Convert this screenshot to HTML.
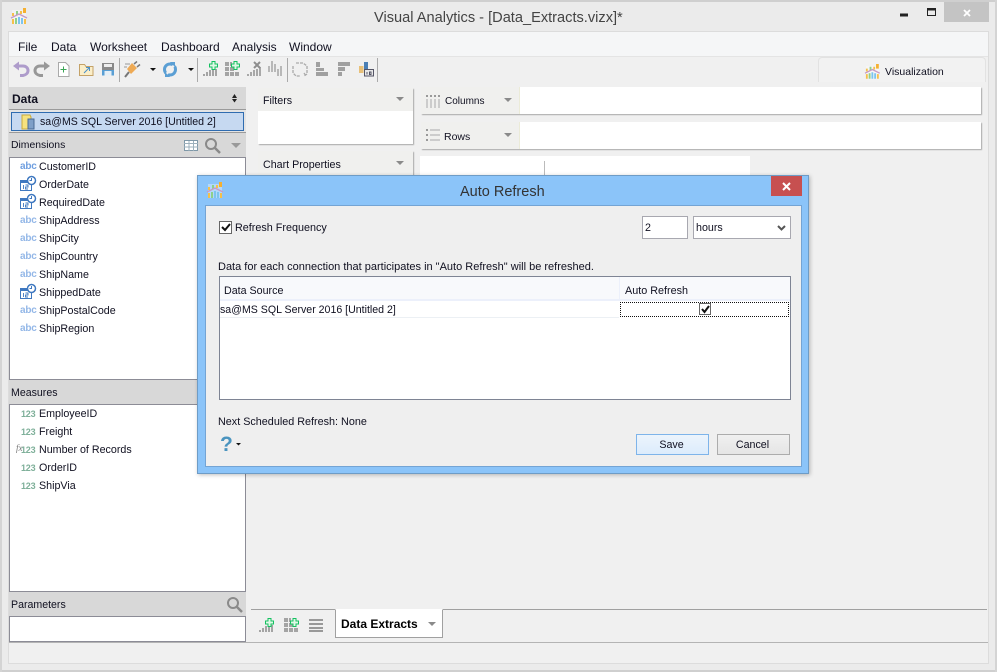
<!DOCTYPE html>
<html><head><meta charset="utf-8">
<style>
html,body{margin:0;padding:0;width:997px;height:672px;overflow:hidden;background:#ebebeb}
body{position:relative;font-family:"Liberation Sans",sans-serif;font-size:10.7px;color:#101020}
.b{position:absolute;box-sizing:border-box}
.t{position:absolute;white-space:nowrap;line-height:14px;margin-top:1px}
svg{position:absolute;left:0;top:0}
.abc{position:absolute;left:20px;color:#6f9fe0;font-size:10px;font-weight:bold;line-height:14px;margin-top:1px;letter-spacing:-.2px}
.n{position:absolute;left:21px;color:#7fb09a;font-size:9px;font-weight:bold;line-height:14px;margin-top:1px;letter-spacing:-.2px}
.f{position:absolute;left:39px;white-space:nowrap;line-height:14px;font-size:10.7px;margin-top:1px}
.tri{position:absolute;width:0;height:0;border-left:4.5px solid transparent;border-right:4.5px solid transparent;border-top:4.5px solid #8a8a8a}
.sh{background:#fff;box-shadow:1px 1px 1px #aaa}
</style></head><body>
<div class="b" style="left:0;top:0;width:997px;height:2px;background:#cfcfcf"></div>
<div class="b" style="left:0;top:670px;width:997px;height:2px;background:#cfcfcf"></div>
<div class="b" style="left:0;top:0;width:2px;height:672px;background:#d4d4d4"></div>
<div class="b" style="left:995px;top:0;width:2px;height:672px;background:#d4d4d4"></div>
<div class="t" style="left:374px;top:7px;font-size:14.6px;line-height:20px;color:#444">Visual Analytics - [Data_Extracts.vizx]*</div>

<div class="b" style="left:8px;top:31px;width:981px;height:633px;background:#f0f0f0;border:1px solid #dcdcdc"></div>
<div class="b" style="left:9px;top:32px;width:979px;height:25px;background:#f5f6f7;border-bottom:1px solid #e4e4e4"></div>
<div class="t" style="left:18px;top:39px;font-size:12px">File</div>
<div class="t" style="left:51px;top:39px;font-size:12px">Data</div>
<div class="t" style="left:90px;top:39px;font-size:12px">Worksheet</div>
<div class="t" style="left:161px;top:39px;font-size:12px">Dashboard</div>
<div class="t" style="left:232px;top:39px;font-size:12px">Analysis</div>
<div class="t" style="left:289px;top:39px;font-size:12px">Window</div>

<!-- visualization tab -->
<div class="b" style="left:818px;top:57px;width:168px;height:25px;background:#f2f2f2;border:1px solid #e2e2e2;border-bottom:none;border-radius:4px 4px 0 0"></div>
<div class="t" style="left:885px;top:64px;font-size:10.5px">Visualization</div>

<!-- left panel -->
<div class="b" style="left:9px;top:87px;width:237px;height:555px;background:#d8d8d8"></div>
<div class="t" style="left:12px;top:91px;font-size:12px;font-weight:bold">Data</div>
<div class="b" style="left:9px;top:109px;width:237px;height:24px;background:#e4e4e4;border-top:1px solid #9a9a9a;border-bottom:1px solid #9a9a9a"></div>
<div class="b" style="left:11px;top:112px;width:233px;height:19px;background:#c6d9f1;border:1px solid #2f6cb0"></div>
<div class="t" style="left:40px;top:114px;font-size:10.6px">sa@MS SQL Server 2016 [Untitled 2]</div>
<div class="t" style="left:11px;top:138px;font-size:10.4px">Dimensions</div>
<div class="b" style="left:9px;top:157px;width:237px;height:223px;background:#fff;border:1px solid #8c8c96"></div>
<div class="abc" style="top:159px">abc</div><div class="f" style="top:159px">CustomerID</div>
<div class="f" style="top:177px">OrderDate</div>
<div class="f" style="top:195px">RequiredDate</div>
<div class="abc" style="top:213px;opacity:.75">abc</div><div class="f" style="top:213px">ShipAddress</div>
<div class="abc" style="top:231px;opacity:.75">abc</div><div class="f" style="top:231px">ShipCity</div>
<div class="abc" style="top:249px;opacity:.75">abc</div><div class="f" style="top:249px">ShipCountry</div>
<div class="abc" style="top:267px;opacity:.75">abc</div><div class="f" style="top:267px">ShipName</div>
<div class="f" style="top:285px">ShippedDate</div>
<div class="abc" style="top:303px;opacity:.75">abc</div><div class="f" style="top:303px">ShipPostalCode</div>
<div class="abc" style="top:321px;opacity:.75">abc</div><div class="f" style="top:321px">ShipRegion</div>
<div class="t" style="left:11px;top:385px;font-size:10.6px">Measures</div>
<div class="b" style="left:9px;top:404px;width:237px;height:188px;background:#fff;border:1px solid #8c8c96"></div>
<div class="n" style="top:406px">123</div><div class="f" style="top:406px">EmployeeID</div>
<div class="n" style="top:424px">123</div><div class="f" style="top:424px">Freight</div>
<div class="t" style="left:16px;top:440px;font-size:9px;font-style:italic;color:#777;font-family:'Liberation Serif',serif">fx</div>
<div class="n" style="top:442px">123</div><div class="f" style="top:442px">Number of Records</div>
<div class="n" style="top:460px">123</div><div class="f" style="top:460px">OrderID</div>
<div class="n" style="top:478px">123</div><div class="f" style="top:478px">ShipVia</div>
<div class="t" style="left:11px;top:597px;font-size:10.6px">Parameters</div>
<div class="b" style="left:9px;top:616px;width:237px;height:26px;background:#fff;border:1px solid #8c8c96"></div>

<!-- filters -->
<div class="b sh" style="left:258px;top:88px;width:155px;height:56px"></div>
<div class="b" style="left:258px;top:88px;width:155px;height:23px;background:#f0f0ee"></div>
<div class="t" style="left:263px;top:93px">Filters</div>
<div class="tri" style="left:396px;top:97px"></div>
<div class="b sh" style="left:258px;top:151px;width:155px;height:40px"></div>
<div class="b" style="left:258px;top:151px;width:155px;height:26px;background:#f0f0ee"></div>
<div class="t" style="left:263px;top:157px">Chart Properties</div>
<div class="tri" style="left:396px;top:161px"></div>

<!-- shelves -->
<div class="b sh" style="left:421px;top:87px;width:560px;height:27px"></div>
<div class="b" style="left:421px;top:87px;width:99px;height:27px;background:#f0f0ee;border-right:1px solid #ebebd8"></div>
<div class="t" style="left:445px;top:94px;font-size:10px">Columns</div>
<div class="tri" style="left:504px;top:98px"></div>
<div class="b sh" style="left:421px;top:122px;width:560px;height:27px"></div>
<div class="b" style="left:421px;top:122px;width:99px;height:27px;background:#f0f0ee;border-right:1px solid #ebebd8"></div>
<div class="t" style="left:444px;top:129px;font-size:10.5px">Rows</div>
<div class="tri" style="left:504px;top:133px"></div>
<div class="b" style="left:420px;top:156px;width:330px;height:30px;background:#fff"></div>
<div class="b" style="left:544px;top:161px;width:1px;height:25px;background:#bbb"></div>

<!-- tab bar -->
<div class="b" style="left:251px;top:609px;width:736px;height:1px;background:#a0a0a0"></div>
<div class="b" style="left:335px;top:609px;width:108px;height:29px;background:#fff;border:1px solid #a0a0a0;border-top:1px solid #fff"></div>
<div class="t" style="left:341px;top:616px;font-size:12px;font-weight:bold;color:#000">Data Extracts</div>
<div class="tri" style="left:428px;top:622px"></div>
<div class="b" style="left:9px;top:642px;width:979px;height:1px;background:#b4b4b4"></div>

<!-- base icons -->
<svg width="997" height="672" viewBox="0 0 997 672" fill="none">
<defs>
<g id="logo">
<rect x="1" y="2" width="14" height="14" fill="#fff" opacity=".35"/>
<path d="M1 11h2v5h-2zM13 11h2v5h-2z" fill="#f5c04a"/>
<path d="M4 10h2v6h-2z" fill="#8fd08a"/>
<path d="M7 9h2v7h-2zM10 10h2v6h-2z" fill="#7cc4ee"/>
<path d="M1 5h2v3h-2zM9 3h2v3h-2z" fill="#f5c04a"/>
<path d="M5 3h2v4h-2z" fill="#8fd08a"/>
<path d="M12 0h3v5h-3z" fill="#f5b030"/>
<path d="M0 10l8-4 8 4" stroke="#c79ac4" stroke-width="1.400"/>
</g>
</defs>
<use href="#logo" transform="translate(11,8)"/>
<!-- undo -->
<path d="M18 66h5c3 0 5 2 5 4.500s-2 4.500-5 5h-3" stroke="#ae9ccb" stroke-width="3"/><path d="M13 66l6-4.500v9z" fill="#ae9ccb"/>
<!-- redo -->
<path d="M45 66h-5c-3 0-5 2-5 4.500s2 4.500 5 5h3" stroke="#989898" stroke-width="3"/><path d="M50 66l-6-4.500v9z" fill="#989898"/>
<!-- new -->
<path d="M58.500 62.500h7l3.500 3.500v10.500h-10.500z" fill="#fff" stroke="#aaa"/><path d="M63.500 66.500v6M60.500 69.500h6" stroke="#3aa655"/>
<!-- folder -->
<path d="M79.500 65.500v10h13.500v-9h-7l-1.500-2h-5z" fill="#fbeec8" stroke="#c4a268"/><path d="M84 73l5-5M86 67.500h3.500v3.500" stroke="#4a90c8"/>
<!-- save -->
<path d="M102 63h12v12.500h-12z" fill="#8a8a8a"/><path d="M104 64h8v3h-8z" fill="#eee"/><path d="M102 70h12v5.500h-12z" fill="#5a9fd4"/><path d="M104.500 71h7v4.500h-7z" fill="#e6eff6"/>
<path d="M119.500 58v24" stroke="#aaa"/>
<!-- plug -->
<path d="M125 77l4-5" stroke="#777" stroke-width="2"/><path d="M127 69l5-6 5 5-6 6z" fill="#eeaa55"/><path d="M134 64l3-2.500M137 67l3-2.500" stroke="#777" stroke-width="1.500"/><path d="M125 64h5M124 67h3" stroke="#999"/>
<path d="M150 68h6l-3 3z" fill="#111"/>
<!-- refresh -->
<circle cx="170" cy="69.500" r="5.500" stroke="#5b9fd4" stroke-width="3"/><path d="M176 63l-12 14" stroke="#f0f0f0" stroke-width="2.200"/><path d="M170 62h5v5zM170 77h-5v-5z" fill="#5b9fd4"/>
<path d="M188 68h6l-3 3z" fill="#111"/>
<path d="M197.500 58v24" stroke="#aaa"/>
<!-- chart+ -->
<path d="M203 74h2v2h-2zM206 72h2v4h-2zM209 70h2v6h-2zM212 70h2v6h-2zM215 69h2v7h-2z" fill="#a4a4a4"/>
<path d="M212 61.500h3v2.500h2.500v3h-2.500v2.500h-3v-2.500h-2.500v-3h2.500z" fill="#dff8e6" stroke="#14c060"/>
<!-- grid+ -->
<path d="M225 62h4v4h-4zM230 62h2v4h-2zM225 67h4v4h-4zM230 67h4v4h-4zM235 72h4v4h-4zM225 72h4v4h-4zM230 72h4v4h-4z" fill="#a4a4a4"/>
<path d="M234 61.500h3v2.500h2.500v3h-2.500v2.500h-3v-2.500h-2.500v-3h2.500z" fill="#dff8e6" stroke="#14c060"/>
<!-- chart x -->
<path d="M247 74h2v2h-2zM250 72h2v4h-2zM253 70h2v6h-2zM256 69h2v7h-2zM259 67h2v9h-2z" fill="#a8a8a8"/>
<path d="M254 62l6 6M260 62l-6 6" stroke="#8e8e8e" stroke-width="2"/>
<!-- chart -->
<path d="M268 66h2v6h-2zM271 61h2v11h-2zM274 64h2v8h-2zM277 69h2v7h-2zM280 66h2v10h-2z" fill="#b8b8b8"/>
<path d="M287.500 58v24" stroke="#aaa"/>
<!-- lasso -->
<path d="M296 63h7l4 3v8l-3 2M293 66v7l3 3h4M304 73l2 3" stroke="#aaa" stroke-width="1.300" stroke-dasharray="3 1"/>
<!-- sort -->
<path d="M316 62h4v5h-4zM316 68h8v3h-8zM316 72h12v4h-12z" fill="#a0a0a0"/>
<path d="M338 62h12v4h-12zM338 67h7v4h-7zM338 72h4v4h-4z" fill="#a0a0a0"/>
<path d="M359 66h4.500v7h-4.500z" fill="#e8c078"/><path d="M364 62h4v7h-4z" fill="#4a7fb5"/><path d="M364.500 69.500h9v6.500h-9z" fill="#e8e8e8" stroke="#556"/><path d="M367 72v2.500M369.500 72h1.500v2.500h-1.500z" stroke="#556"/>
<path d="M377.500 58v24" stroke="#aaa"/>
<!-- visualization logo -->
<use href="#logo" transform="translate(865,64) scale(.92)"/>
<!-- window buttons -->
<path d="M900 13.500h8v3h-8z" fill="#222"/>
<path d="M927.500 8.500h8v7h-8z" stroke="#222"/><path d="M927 9.500h9" stroke="#222" stroke-width="2"/>
<path d="M944 2h45v20h-45z" fill="#c4c4c4"/><path d="M964 10l6 6M970 10l-6 6" stroke="#fff" stroke-width="1.800"/>
<!-- panel icons -->
<path d="M232 98l2.500-4 2.500 4zM232 99h5l-2.500 3.500z" fill="#222"/>
<path d="M22 115h8l1 2v12h-9z" fill="#f6e27e" stroke="#c9a93a"/><path d="M28 119h6v10h-6z" fill="#7fa0c8" stroke="#4a6a94"/>
<path d="M184.500 140.500h13v10h-13z" fill="#fff" stroke="#7f98a8"/><path d="M184 143.500h14M184 147h14M189 141v10M193.500 141v10" stroke="#9db0bc"/>
<circle cx="211" cy="144" r="5" stroke="#8a8a8a" stroke-width="2"/><path d="M215 148l5 5" stroke="#8a8a8a" stroke-width="2.500"/>
<path d="M231 143h10l-5 5z" fill="#999"/>
<circle cx="233" cy="603" r="5" stroke="#8a8a8a" stroke-width="2"/><path d="M237 607l5 5" stroke="#8a8a8a" stroke-width="2.500"/>
<!-- date icons -->
<g id="d1"><path d="M20.500 180.500h11v10h-11z" fill="#fff" stroke="#3f78c0"/><path d="M20 180h12v3h-12z" fill="#3f78c0"/><path d="M23.500 185v4M25.500 185h2.500v2h-2.500v2h2.500" stroke="#3f78c0" stroke-width=".9"/><circle cx="31.500" cy="180.500" r="4" fill="#fff" stroke="#3f78c0" stroke-width="1.500"/><path d="M31.500 178v2.500h-2" stroke="#3f78c0"/></g>
<use href="#d1" y="18"/><use href="#d1" y="108"/>
<!-- shelf icons -->
<path d="M426 95h2v2h-2zM430 95h2v2h-2zM434 95h2v2h-2zM438 95h2v2h-2z" fill="#999"/><path d="M426 99h2v9h-2zM430 99h2v9h-2zM434 99h2v9h-2zM438 99h2v9h-2z" fill="#ccc"/>
<path d="M426 129h2v2h-2zM426 134h2v2h-2zM426 139h2v2h-2z" fill="#999"/><path d="M430 129h10v2h-10zM430 134h10v2h-10zM430 139h10v2h-10z" fill="#ccc"/>
<!-- bottom icons -->
<path d="M259 630h2v2h-2zM262 628h2v4h-2zM265 626h2v6h-2zM268 626h2v6h-2zM271 625h2v7h-2z" fill="#a4a4a4"/>
<path d="M268 618.500h3v2.500h2.500v3h-2.500v2.500h-3v-2.500h-2.500v-3h2.500z" fill="#dff8e6" stroke="#14c060"/>
<path d="M284 618h4v4h-4zM284 623h4v4h-4zM289 623h4v4h-4zM284 628h4v4h-4zM289 628h4v4h-4zM294 628h4v4h-4zM289 618h2v4h-2z" fill="#a4a4a4"/>
<path d="M293 618.500h3v2.500h2.500v3h-2.500v2.500h-3v-2.500h-2.500v-3h2.500z" fill="#dff8e6" stroke="#14c060"/>
<path d="M309 619h14v2h-14zM309 623h14v2h-14zM309 627h14v2h-14zM309 630h14v2h-14z" fill="#999"/>
</svg>

<!-- dialog -->
<div class="b" style="left:197px;top:175px;width:612px;height:299px;background:#8bc4f9;border:1px solid #6e9cc6;box-shadow:1px 1px 4px rgba(0,0,0,.25);z-index:5">
  <div class="b" style="left:7px;top:29px;width:597px;height:262px;background:#efefef;border:1px solid #74a4d4"></div>
  <div class="b" style="left:573px;top:0;width:31px;height:20px;background:#c75050"></div>
  <svg width="612" height="299" viewBox="0 0 612 299" fill="none">
    <path d="M585 7l7 7M592 7l-7 7" stroke="#fff" stroke-width="2"/>
    <use href="#logo" transform="translate(9,6)"/>
    <!-- refresh freq checkbox -->
    <path d="M21.500 45.500h12v12h-12z" fill="#fff" stroke="#666"/><path d="M24 51l3 3 5-6" stroke="#111" stroke-width="2"/>
    <!-- help -->
    <path d="M38 267h5l-2.500 2.500z" fill="#111"/>
  </svg>
  <div class="t" style="left:262px;top:6px;font-size:14.5px;line-height:18px;color:#333">Auto Refresh</div>
  <div class="t" style="left:37px;top:44px;font-size:10.8px">Refresh Frequency</div>
  <div class="b" style="left:444px;top:40px;width:46px;height:23px;background:#fff;border:1px solid #a8a8b0"></div>
  <div class="t" style="left:447px;top:44px">2</div>
  <div class="b" style="left:495px;top:40px;width:98px;height:23px;background:#fff;border:1px solid #a8a8b0"></div>
  <div class="t" style="left:498px;top:44px">hours</div>
  <svg width="612" height="299" viewBox="0 0 612 299" fill="none" style="z-index:2"><path d="M580 50l3.500 3.500 3.500-3.500" stroke="#555" stroke-width="2"/></svg>
  <div class="t" style="left:20px;top:83px;font-size:11px">Data for each connection that participates in "Auto Refresh" will be refreshed.</div>
  <div class="b" style="left:21px;top:100px;width:572px;height:124px;background:#fff;border:1px solid #7e8494"></div>
  <div class="b" style="left:22px;top:101px;width:570px;height:24px;background:#f8f9fc;border-bottom:2px solid #ecf0fb"></div>
  <div class="b" style="left:421px;top:101px;width:1px;height:24px;background:#ecf0fb"></div>
  <div class="t" style="left:26px;top:107px">Data Source</div>
  <div class="t" style="left:427px;top:107px;font-size:10.8px">Auto Refresh</div>
  <div class="b" style="left:22px;top:141px;width:399px;height:1px;background:#ecf0f4"></div>
  <div class="t" style="left:22px;top:126px;font-size:10.6px">sa@MS SQL Server 2016 [Untitled 2]</div>
  <div class="b" style="left:422px;top:126px;width:169px;height:15px;border:1px dotted #111"></div>
  <svg width="612" height="299" viewBox="0 0 612 299" fill="none" style="z-index:2">
    <path d="M501.500 127.500h11v11h-11z" fill="#fff" stroke="#666"/><path d="M504 133l2.500 3 4.500-6" stroke="#111" stroke-width="2"/>
  </svg>
  <div class="t" style="left:20px;top:238px;font-size:10.8px">Next Scheduled Refresh: None</div>
  <div class="t" style="left:22px;top:256px;font-size:21px;line-height:24px;font-weight:bold;color:#4a94bf">?</div>
  <div class="b" style="left:438px;top:258px;width:73px;height:21px;background:linear-gradient(#ecf4fc,#dcecfc);border:1px solid #7eb4ea"></div>
  <div class="t" style="left:438px;top:261px;width:71px;text-align:center">Save</div>
  <div class="b" style="left:519px;top:258px;width:73px;height:21px;background:linear-gradient(#f0f0f0,#e5e5e5);border:1px solid #acacac"></div>
  <div class="t" style="left:519px;top:261px;width:71px;text-align:center">Cancel</div>
</div>
</body></html>
